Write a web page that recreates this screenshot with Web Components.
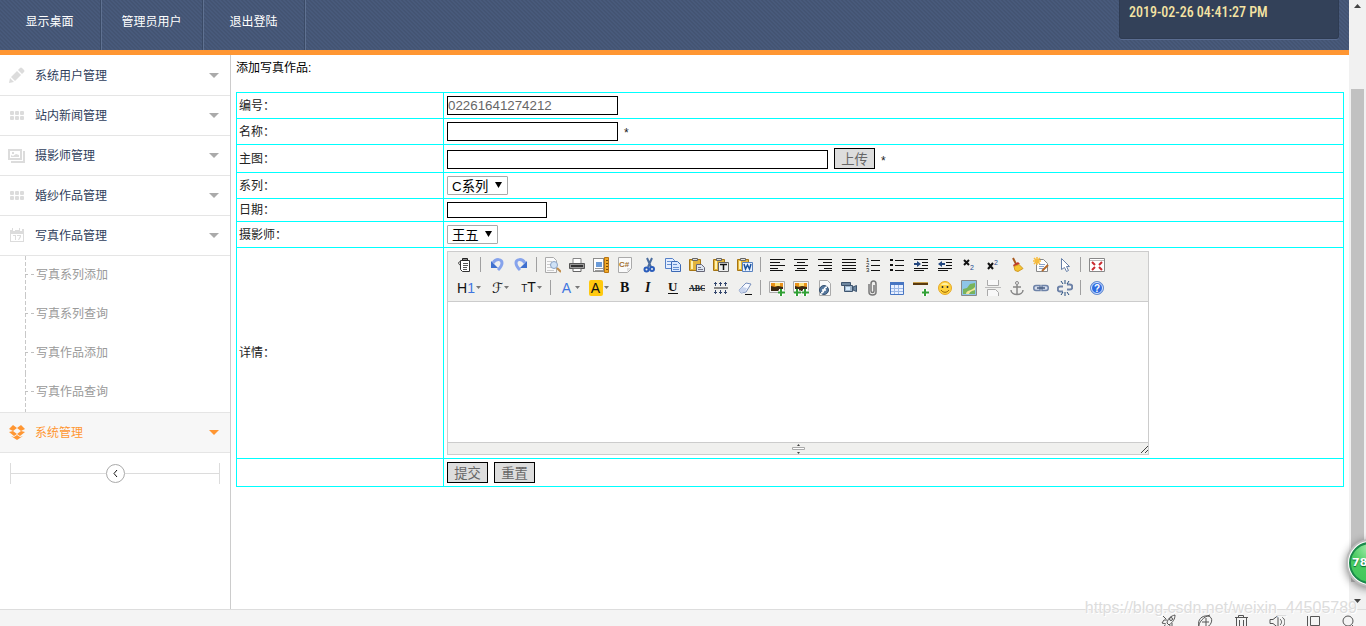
<!DOCTYPE html>
<html lang="zh-CN">
<head>
<meta charset="utf-8">
<title>添加写真作品</title>
<style>
html,body{margin:0;height:100%;overflow:hidden}
body{font:12px/16px "Liberation Sans","Noto Sans CJK SC",sans-serif;color:#222;background:#fff}
</style>
</head>
<body>
<admin-app></admin-app>
<script>
const define = (name, html, setup) => customElements.define(name, class extends HTMLElement {
  constructor() {
    super();
    const root = this.attachShadow({mode: 'open'});
    root.innerHTML = '<style>*{box-sizing:border-box}a{color:inherit;text-decoration:none}button,input,select,textarea{font-family:inherit;margin:0}svg{display:block}</style>' + (typeof html === 'function' ? html(this) : html);
    if (setup) setup(this, root);
  }
});

/* ---------- header ---------- */
define('nav-link', `<style>
:host{display:block}
a{display:flex;width:102px;height:50px;padding:0 2px 6px 0;align-items:center;justify-content:center;color:#fff;border-right:1px solid #5f7191;box-shadow:inset -1px 0 #3a4a66}
</style><a href="#"><slot></slot></a>`);

define('clock-box', `<style>
:host{display:block;width:220px;height:39px;padding:4px 9px;background:#334159;border-radius:0 0 3px 3px;border:1px solid #2e3b52;border-top:0;box-shadow:0 1px #5a6c90;color:#f5e4a4;font:500 14px/17px "Roboto Condensed",Roboto,sans-serif}
</style><time><slot></slot></time>`);

define('app-header', `<style>
:host{display:flex;justify-content:space-between;align-items:flex-start;height:55px;padding-right:10px;border-bottom:5px solid #ff9632;background:linear-gradient(45deg,#3f4f6c88 25%,transparent 25% 50%,#3f4f6c88 50% 75%,transparent 75%) 0 0/4px 4px #485a7b}
nav{display:flex}
</style><nav><nav-link>显示桌面</nav-link><nav-link>管理员用户</nav-link><nav-link>退出登陆</nav-link></nav><clock-box>2019-02-26 04:41:27 PM</clock-box>`);

/* ---------- sidebar ---------- */
const sideIcons = {
  pencil: '<path d="M1 16l1-5 4 4zM3 10l6-6 4 4-6 6zM10 3l2-2q1-1 2 0l2 2q1 1 0 2l-2 2z"/>',
  grid: '<rect x="2" y="4" width="4" height="4" rx="1"/><rect x="7" y="4" width="4" height="4" rx="1"/><rect x="12" y="4" width="4" height="4" rx="1"/><rect x="2" y="9" width="4" height="4" rx="1"/><rect x="7" y="9" width="4" height="4" rx="1"/><rect x="12" y="9" width="4" height="4" rx="1"/>',
  photo: '<path fill-rule="evenodd" d="M0 2h14v11H0zM2 4v7h10V4z"/><path d="M3 10V8l2 1 3-2 3 1v2zM4 5h2v2H4zM15 4h2v12H3v-2h12z"/>',
  calendar: '<path fill-rule="evenodd" d="M2 3h2V1h1v3h2V3h4V1h1v3h2V2h2v13H2zM3 7v7h12V7z"/><path d="M5 8h3v5H7V9H5zM9 8h4v2l-2 3h-1l2-4H9z"/>',
  box: '<path d="M5 1l4 3-4 3-4-2zM13 1L9 4l4 3 4-2zM1 8l4-1 4 3-3 2zM17 8l-4-1-4 3 3 2zM3 12l3 1 3-2 3 2 3-1-6 4z"/>'
};
define('side-item', el => `<style>
:host{display:block;border-bottom:1px solid #e5e5e5;color:#2f3e5c}
:host([active]){border-top:1px solid #e5e5e5;background:#f7f7f7;color:#ff9632;--tint:#ff9632;--arrow:#ff9632}
a{display:flex;align-items:center;height:39px;padding:0 11px 0 8px}
.i{width:18px;height:17px;fill:var(--tint,#dcdcdc);margin-right:9px}
.a{fill:var(--arrow,#aaa);margin-left:auto}
</style><a href="#"><svg class="i" viewBox="0 0 18 17">${sideIcons[el.getAttribute('icon')]}</svg><slot></slot><svg class="a" width="10" height="5"><path d="M0 0h10L5 5z"/></svg></a>`);

define('side-sub', `<style>
:host{display:block;margin-left:25px;color:#999;background:repeating-linear-gradient(#c8c8c8 0 4px,transparent 4px 6px) 0 0/1px 100% no-repeat}
a{display:flex;align-items:center;height:39px;padding-bottom:2px}
a::before{content:"";width:11px;height:1px;background:repeating-linear-gradient(90deg,#c0c0c0 0 3px,transparent 3px 6px)}
</style><a href="#"><slot></slot></a>`);

define('side-collapse', `<style>
:host{display:flex;align-items:center;height:21px;margin:10px 10px 0;border:solid #dcdcdc;border-width:0 1px}
i{flex:1;height:1px;background:#dcdcdc}
button{width:19px;height:19px;padding:0;border:1px solid #aaa;border-radius:50%;background:#fff;display:grid;place-items:center}
</style><i></i><button aria-label="收起"><svg width="5" height="7"><path d="M4 0L1 3.5 4 7" fill="none" stroke="#111"/></svg></button><i></i>`);

define('side-nav', `<style>
:host{display:block;flex:none;width:231px;padding-top:1px;border-right:1px solid #ccc}
</style>
<side-item icon="pencil">系统用户管理</side-item><side-item icon="grid">站内新闻管理</side-item><side-item icon="photo">摄影师管理</side-item><side-item icon="grid">婚纱作品管理</side-item><side-item icon="calendar">写真作品管理</side-item>
<side-sub>写真系列添加</side-sub><side-sub>写真系列查询</side-sub><side-sub>写真作品添加</side-sub><side-sub>写真作品查询</side-sub>
<side-item icon="box" active>系统管理</side-item><side-collapse></side-collapse>`);

/* ---------- rich text editor ---------- */
const lines = d => `<path stroke="#111" stroke-width="1" d="${d}"/>`;
const clip = '<path fill="#e3b53c" stroke="#a67514" d="M.5 2.5h11v11H.5z"/><path fill="#fff2b0" d="M2 4h2v8H2z"/><path fill="#ddd" stroke="#666" d="M3.5 1.5h5v2h-5z"/>';
const page = '<path fill="#fafafa" stroke="#aaa" d="M2.5.5h8l3 3v12h-11z"/>';
const picture = '<path fill="#f6f6f6" stroke="#aaa" d="M.5 1.5h15v11H.5z"/><path fill="#e9931a" d="M2 3h12v4H2z"/><path fill="#ffe27a" d="M6 3h5v3H6z"/><path fill="#3b2a12" d="M2 6l4 1 3-1 5 1v4H2z"/>';
const plus = x => `<path stroke="#fff" stroke-width="4" d="M${x} 9v7M${x - 3} 12.5h7"/><path stroke="#31a035" stroke-width="2" d="M${x} 9v7M${x - 3} 12.5h7"/>`;
const G = {
  source: '<path fill="#fff" stroke="#333" d="M3.5 3.5h9v11h-7l-2-2z"/><path fill="none" stroke="#333" d="M4 5c-3-1-3 2-1 3"/><path fill="#888" stroke="#222" d="M5.500 1.500h5v2h-5z"/><path stroke="#555" d="M6 6.500h5M6 8.500h5M6 10.500h4M6 12.500h4"/>',
  undo: '<path d="M4 6c3-5 9-4 9 0 0 3-2 5-4 7" fill="none" stroke="#86a3ec" stroke-width="3"/><path fill="#3f70cf" d="M2 4v7h7z"/>',
  redo: '<path d="M12 6C9 1 3 2 3 6c0 3 2 5 4 7" fill="none" stroke="#86a3ec" stroke-width="3"/><path fill="#3f70cf" d="M14 4v7H7z"/>',
  preview: '<path fill="#fafafa" stroke="#aaa" d="M.5.5h8l3 3v12H.5z"/><path stroke="#ccc" d="M2 4.500h5M2 7.500h4M2 10.500h5M2 13.500h7"/><circle cx="9" cy="8" r="3.500" fill="#cfe2f7" stroke="#8ba2c4"/><path stroke="#c08d4a" stroke-width="2" d="M12 11l4 4"/>',
  print: '<path fill="#fff" stroke="#888" d="M4 1.500h8v5H4z"/><path fill="#999" stroke="#555" d="M.5 6.500h15v5H.5z"/><path stroke="#333" stroke-width="2" d="M2 9h12"/><path fill="#fff" stroke="#666" d="M4 11.500h8v3H4z"/>',
  template: '<path fill="#fff" stroke="#222" stroke-dasharray="1 1" d="M.5 1.500h10v13H.5z"/><path fill="#6b9bd8" d="M3 5h6v5H3z"/><path stroke="#999" d="M2 11.500h8M2 13.500h8"/><path fill="#f0a928" stroke="#b87411" d="M11.500.5h4v15h-4z"/><path stroke="#7d4d08" d="M13 3.500h2M13 6.500h2M13 9.500h2M13 12.500h2"/>',
  code: '<path fill="#fafafa" stroke="#aaa" d="M1.500.5h13v11l-4 4h-9z"/><path fill="#ddd" d="M10 15v-4h4z"/><text x="2" y="10" font-size="8" font-weight="700" fill="#a3702a">C#</text>',
  cut: '<path stroke="#4c6d9e" stroke-width="2" d="M6 1l4 9M11 1l-4 9"/><circle cx="5.500" cy="12.500" r="2" fill="none" stroke="#2b5dbb" stroke-width="2"/><circle cx="11" cy="12" r="2" fill="none" stroke="#2b5dbb" stroke-width="2"/>',
  copy: '<path fill="#e4eeff" stroke="#5580c8" d="M.5 1.500h7l2 2v8h-9z"/><path fill="#dbe9ff" stroke="#3c69b5" d="M6.500 4.500h6l3 3v7h-9z"/><path stroke="#6790d0" d="M2 4.500h4M2 7.500h4M8 7.500h4M8 10.500h6M8 12.500h6"/>',
  paste: clip + '<path fill="#dde5f0" stroke="#667" d="M7.500 7.500h5l3 3v4h-8z"/><path stroke="#778" d="M9 10.500h3M9 12.500h5"/>',
  plain: clip + '<path fill="#eee" stroke="#666" d="M5.500 5.500h10v9h-10z"/><path stroke="#111" stroke-width="1.500" d="M7 7.500h7M10.500 7v6"/>',
  word: clip + '<path fill="#eaf2ff" stroke="#5882c0" d="M5.500 5.500h10v9h-10z"/><path fill="none" stroke="#19529e" stroke-width="1.500" d="M7 7l1.500 5 2-4 2 4L14 7"/>',
  left: lines('M1 2.500h15M1 5.500h10M1 8.500h15M1 11.500h8M1 13.500h13'),
  center: lines('M1 2.500h14M4 5.500h8M1 8.500h14M4 11.500h8M2 13.500h12'),
  right: lines('M1 2.500h14M6 5.500h9M1 8.500h14M7 11.500h8M2 13.500h13'),
  full: lines('M1 2.500h14M1 5.500h14M1 8.500h14M1 11.500h14M1 13.500h14'),
  ol: lines('M6 3.500h9M6 8.500h9M6 13.500h9') + '<text font-size="6" x="1" y="5">1</text><text font-size="6" x="1" y="10">2</text><text font-size="6" x="1" y="15">3</text>',
  ul: lines('M6 3.500h9M6 8.500h9M6 13.500h9') + '<path d="M1 2h3v2H1zM1 7h3v2H1zM1 12h3v2H1z"/>',
  indent: lines('M1 2.500h14M9 5.500h6M9 8.500h6M1 11.500h14M1 13.500h10') + '<path fill="#23477f" d="M1 6h3V4l4 3-4 3V8H1z"/>',
  outdent: lines('M1 2.500h14M9 5.500h6M9 8.500h6M1 11.500h14M1 13.500h10') + '<path fill="#23477f" d="M8 6H5V4L1 7l4 3V8h3z"/>',
  sub: '<path stroke="#111" stroke-width="2" d="M3 3l5 5M8 3L3 8"/><text x="9" y="13" font-size="7" fill="#234b8d">2</text>',
  sup: '<path stroke="#111" stroke-width="2" d="M3 6l5 6M8 6l-5 6"/><text x="9" y="8" font-size="7" fill="#234b8d">2</text>',
  brush: '<path stroke="#a7581c" stroke-width="2" d="M4 1l3 6"/><path fill="#c0392b" d="M4 8l5-3 2 2-6 3z"/><path fill="#f5c531" stroke="#d29a23" d="M5 9.500l5-2 4 4-5 3-3-1z"/>',
  quick: '<path fill="#fff" stroke="#888" d="M3.500 2.500h7l4 4v8h-11z"/><path stroke="#8aa4cc" d="M6 7.500h6M6 9.500h5M6 11.500h6"/><path stroke="#f7bc3c" stroke-width="1.500" d="M4 0v8M0 4h8M1 1l6 6M7 1L1 7"/><path stroke="#b5692a" stroke-width="2" d="M15 8l-6 6"/>',
  select: '<path fill="#fff" stroke="#667fa8" d="M4.500 1.500v11l3-2 2 4 2-1-2-4h3z"/>',
  fullscreen: '<path fill="#fff" stroke="#888" d="M.5 1.500h15v13H.5z"/><path stroke="#bbb" d="M1 3.500h14"/><path stroke="#c92c31" stroke-width="2" d="M3 5l3 3M13 5l-3 3M3 13l3-3M13 13l-3-3"/>',
  bold: '<text x="3" y="12" font-family="Liberation Serif" font-size="14" font-weight="700">B</text>',
  italic: '<text x="4" y="12" font-family="Liberation Serif" font-size="14" font-weight="700" font-style="italic">I</text>',
  under: '<text x="3" y="11" font-family="Liberation Serif" font-size="13" font-weight="700">U</text><path stroke="#111" d="M3 13.500h10"/>',
  strike: '<text x="0" y="11" font-family="Liberation Serif" font-size="8" font-weight="700">ABC</text><path stroke="#234" d="M0 8.500h16"/>',
  lineheight: '<path stroke="#888" stroke-width="2" d="M1 8h14"/><path stroke="#34476d" d="M1 3.500h3M6 3.500h3M11 3.500h3M2.500 2v4M7.500 2v4M12.500 2v4M1 12.500h3M6 12.500h3M11 12.500h3M2.500 10v4M7.500 10v4M12.500 10v4"/>',
  eraser: '<path fill="#f7f9ff" stroke="#7890bd" d="M2 10l7-7 5 1-5 8-5 1z"/><path fill="#c8d4ed" d="M2 10l3-3 5 1-2 4-4 1z"/><path stroke="#111" d="M8 14.500h7"/>',
  image: picture + plus(12),
  images: picture + plus(4) + plus(12),
  flash: page + '<circle cx="7" cy="10" r="4.500" fill="#57799f" stroke="#34506f"/><path fill="none" stroke="#fff" stroke-width="1.500" d="M10 7c-4 0-2 6-6 6M5 10h4"/>',
  media: '<path fill="#9fb4c9" stroke="#3e556f" d="M3.500 5.500h8v6h-8z"/><path fill="#6e87a0" stroke="#3e556f" d="M.5 2.500h9v3h-9zM12 7l3.500-1.500v6L12 10z"/><path fill="#d6edff" d="M5 7h4v3H5z"/>',
  file: '<path fill="none" stroke="#777" stroke-width="1.500" d="M4 4v8c0 4 7 4 7 0V4c0-4-5-4-5 0v7c0 2 3 2 3 0V5"/>',
  table: '<path fill="#e8f0ff" stroke="#4675c2" d="M1.500 2.500h13v12h-13z"/><path stroke="#4675c2" stroke-width="3" d="M1 3.500h14"/><path stroke="#9cb8e6" d="M2 8.500h12M2 11.500h12M5.500 5v9M9.500 5v9"/>',
  hr: '<path stroke="#5a3a0f" stroke-width="2" d="M0 4h15"/><path stroke="#c8a050" d="M0 2.500h15"/>' + plus(12),
  smile: '<circle cx="8" cy="8" r="6.500" fill="#ffd23e" stroke="#e6a928"/><path fill="#fff0a0" d="M4 5c2-3 6-3 8 0z"/><path stroke="#333" stroke-width="1.500" d="M5.500 6v2M10.500 6v2"/><path fill="none" stroke="#9a6500" d="M4 10c2 3 6 3 8 0"/>',
  map: '<path fill="#8ec5e8" stroke="#888" d="M.5.5h15v15H.5z"/><path fill="#79b45c" d="M2 9l4-1 3-4 5-1v11H2z"/><path fill="#f4e69b" d="M5 14c0-4 6-3 9-7v3c-4 1-5 2-6 4z"/>',
  pagebreak: '<path fill="#f8f8f8" stroke="#aaa" d="M2.500 0v5.500h11V0M2.500 16V9.500h8l3 3V16"/><path stroke="#bbb" d="M0 7.500h16"/>',
  anchor: '<circle cx="8" cy="3" r="1.500" fill="none" stroke="#888"/><path fill="none" stroke="#888" stroke-width="1.500" d="M8 5v10M4 7h8M2 10c0 6 12 6 12 0"/>',
  link: '<path fill="#d5dded" stroke="#6e83a8" stroke-width="1.500" d="M7 5.500H3c-3 0-3 5 0 5h4zM9 5.500h4c3 0 3 5 0 5H9z"/><path stroke="#465b80" stroke-width="1.500" d="M4 8h8"/>',
  unlink: '<path fill="none" stroke="#6e83a8" stroke-width="2" d="M6 6.500H3c-3 0-3 5 0 5h3M10 4.500h3c3 0 3 5 0 5h-3"/><path stroke="#234b7d" d="M8 0v4M4 1l2 3M12 1l-2 3M8 12v4M4 15l2-3M12 15l-2-3"/>',
  help: '<circle cx="8" cy="8" r="6.500" fill="#2f6ce0" stroke="#6b8fcb"/><circle cx="8" cy="8" r="5.500" fill="none" stroke="#dce8ff"/><text x="5" y="12" font-size="10" font-weight="700" fill="#fff">?</text>'
};
const tool = n => `<button type="button" title="${n}"><svg width="16" height="16" fill="#111">${G[n].replace(/\.(\d)00/g, '.$1')}</svg></button>`;
const drop = (n, t, c) => `<button type="button" class="drop ${c}" title="${n}"><span>${t}</span><svg width="5" height="3" fill="#777"><path d="M0 0h5L2.5 3z"/></svg></button>`;
const sep = '<i></i>';
const tools = s => s.split(' ').map(n => n === '|' ? sep : tool(n)).join('');
define('rich-editor', `<style>
:host{display:block;width:702px;max-width:100%;border:1px solid #ccc;background:#fff}
[role=toolbar]{background:#f0f0ee;border-bottom:1px solid #ccc;padding:1px 5px 2px}
.row{display:flex;height:23px}
button{display:flex;align-items:center;justify-content:center;flex:none;width:24px;padding:0;border:0;background:none;color:#111}
.row>i{width:1px;margin:4px 4px 4px 3px;background:#a0a0a0;flex:none;height:15px}
.drop{width:31px;gap:1px;font-size:14px;line-height:16px}
.drop.n{width:29px}
.drop.h{width:32px}
.f{font-family:"DejaVu Sans","DejaVu Serif",serif}
.n span{color:#3f75e0;width:14px}
.y span{background:#ffc90e;color:#111;border-radius:2px}
b{font-weight:400;color:#3f75e0}small{font-size:10px}
textarea{display:block;width:100%;height:140px;border:0;padding:4px;resize:none;outline:0;background:#fff}
footer{display:grid;grid-template-columns:1fr auto 1fr;align-items:center;height:12px;background:#f0f0ee;border-top:1px solid #ccc}
footer svg:last-child{grid-column:3;justify-self:end}
footer svg:first-child{grid-column:2}
</style><div role="toolbar">
<div class="row">${tools('source | undo redo | preview print template code cut copy paste plain word | left center right full ol ul indent outdent sub sup brush quick select | fullscreen')}</div>
<div class="row">${drop('heading', 'H<b>1</b>', 'h')}${drop('font', 'ℱ', 'f')}${drop('size', '<small>T</small>T', '')}${sep}${drop('color', 'A', 'n')}${drop('highlight', 'A', 'n y')}${tools('bold italic under strike lineheight eraser | image images flash media file table hr smile map pagebreak anchor link unlink | help')}</div>
</div><textarea aria-label="详情"></textarea>
<footer><svg width="13" height="10"><path d="M5 2l1.5-2L8 2zM5 8l1.5 2L8 8z" fill="#444"/><path d="M.5 3.5h12v2H.5z" fill="#fff" stroke="#aaa"/></svg><svg width="8" height="8" stroke="#444"><path d="M1 8l7-7M5 8l3-3"/></svg></footer>`);

/* ---------- form ---------- */
define('pick-list', el => `<style>
:host{display:block;position:relative;flex:none}
select{appearance:none;display:block;width:100%;height:19px;border:1px solid #a9a9a9;border-radius:1px;background:#fff;color:#000;padding:1px 4px 0}
svg{position:absolute;right:6px;top:6px;pointer-events:none}
</style><select aria-label="${el.getAttribute('label')}"><option>${el.getAttribute('value')}</option></select><svg width="7" height="6"><path d="M0 0h7L3.5 6z"/></svg>`);

define('work-form', `<style>
:host{display:block;flex:1;min-width:0;padding:5px 5px 0}
h1{font:inherit;color:#000;margin:0;height:32px}
table{width:100%;border-collapse:collapse;table-layout:fixed}
th,td{border:1px solid #0ff;padding:3px;font-weight:400;text-align:left}
th{width:207px;padding:0 2px}
.f{display:flex;align-items:flex-end;gap:6px}
input{display:block;width:171px;height:19px;border:1px solid #000;padding:0;color:#666;background:#fff;border-radius:0}
.wide{width:381px}.date{width:100px;height:16px}
button{height:21px;width:41px;flex:none;padding:0;border:1px solid #000;background:#ddd;color:#666;border-radius:0}
.c{width:61px}.w{width:51px}
form{margin:0}
</style><h1>添加写真作品:</h1>
<form onsubmit="return false"><table>
<tr><th><label for="no">编号：</label></th><td><div class="f"><input id="no" value="02261641274212"></div></td></tr>
<tr><th><label for="name">名称：</label></th><td><div class="f"><input id="name"><span>*</span></div></td></tr>
<tr><th><label for="pic">主图：</label></th><td><div class="f"><input id="pic" class="wide"><button type="button">上传</button><span>*</span></div></td></tr>
<tr><th>系列：</th><td><div class="f"><pick-list class="c" label="系列" value="C系列"></pick-list></div></td></tr>
<tr><th><label for="day">日期：</label></th><td><div class="f"><input id="day" class="date"></div></td></tr>
<tr><th>摄影师：</th><td><div class="f"><pick-list class="w" label="摄影师" value="王五"></pick-list></div></td></tr>
<tr><th>详情：</th><td><rich-editor></rich-editor></td></tr>
<tr><th></th><td><div class="f"><button>提交</button><button type="reset">重置</button></div></td></tr>
</table></form>`);

/* ---------- window furniture ---------- */
define('scroll-rail', `<style>
:host{display:flex;flex-direction:column;align-items:center;flex:none;width:17px;background:#f1f1f1;padding:4px 0 6px}
b{width:13px;flex:1;margin:81px 0 17px;background:#c1c1c1}
</style><svg width="7" height="4" fill="#444"><path d="M0 4h7L3.5 0z"/></svg><b></b><svg width="7" height="4" fill="#444"><path d="M0 0h7L3.5 4z"/></svg>`);

define('speed-ball', `<style>
:host{display:block;position:absolute;right:-28px;top:539px;width:48px;height:48px;border-radius:50%;border:2px solid #bbb;background:#fff;padding:1px;box-shadow:0 2px 8px #0007}
div{height:100%;border-radius:50%;border:2px solid #1b8a4c;background:radial-gradient(circle at 50% 10%,#a8eeb0,#4ccb62 45%,#3ec659);color:#fff;font:700 11px/38px "DejaVu Sans",sans-serif;padding-left:1px;text-shadow:0 1px 1px #063}
</style><div><slot></slot></div>`);

define('status-bar', `<style>
:host{display:flex;justify-content:flex-end;flex:none;height:17px;padding:4px 9px 0 0;gap:20px;background:#f4f4f4;border-top:1px solid #ddd;overflow:hidden}
button{padding:0;border:0;background:none;width:16px;height:16px}
svg{fill:none;stroke:#555}
</style>
<button aria-label="加速"><svg width="16" height="16"><path d="M6 9c1-5 4-7 8-8 0 4-2 7-6 10zM6 6H3L1 9l4 1M9 11l-1 4 3-2V9M2 2l3 3M4 11l-2 4 5-3"/><circle cx="10" cy="5" r="1.5"/></svg></button>
<button aria-label="下载"><svg width="16" height="16"><path d="M2 12C0 6 5 1 11 2c6 1 4 9-1 11M1 14C2 8 6 3 13 1M5 8h7M9 4v8"/></svg></button>
<button aria-label="清理"><svg width="16" height="16"><path d="M2 3.5h13M5.5 3V1.5h5V3M3.5 4v12M13.5 4v12M6.5 6v9M10.5 6v9"/></svg></button>
<button aria-label="声音"><svg width="16" height="16"><path d="M1 5.500h3l5-4v12l-5-4H1zM11 5c2 2 2 4 0 6M13 3c4 3 4 7 0 10"/></svg></button>
<button aria-label="窗口"><svg width="16" height="16"><path d="M2.5 2v13M5.5 2.5h9v9h-9z"/></svg></button>
<button aria-label="查找"><svg width="16" height="16"><circle cx="7" cy="7" r="5"/><path d="M11 11l4 4"/></svg></button>`);

define('admin-app', `<style>
:host{display:flex;flex-direction:column;height:100vh;position:relative;overflow:hidden}
.view{display:flex;flex:1;min-height:0}
main{display:flex;flex-direction:column;flex:1;min-width:0}
.body{display:flex;flex:1;min-height:0}
.mark{position:absolute;right:9px;bottom:9px;font-size:16px;line-height:18px;color:#ddd;text-shadow:0 0 1px #fff,1px 1px #fff}
</style><div class="view"><main><app-header></app-header><div class="body"><side-nav></side-nav><work-form></work-form></div></main><scroll-rail></scroll-rail></div>
<status-bar></status-bar><span class="mark">https://blog.csdn.net/weixin_44505789</span><speed-ball>78</speed-ball>`);
</script>
</body>
</html>
